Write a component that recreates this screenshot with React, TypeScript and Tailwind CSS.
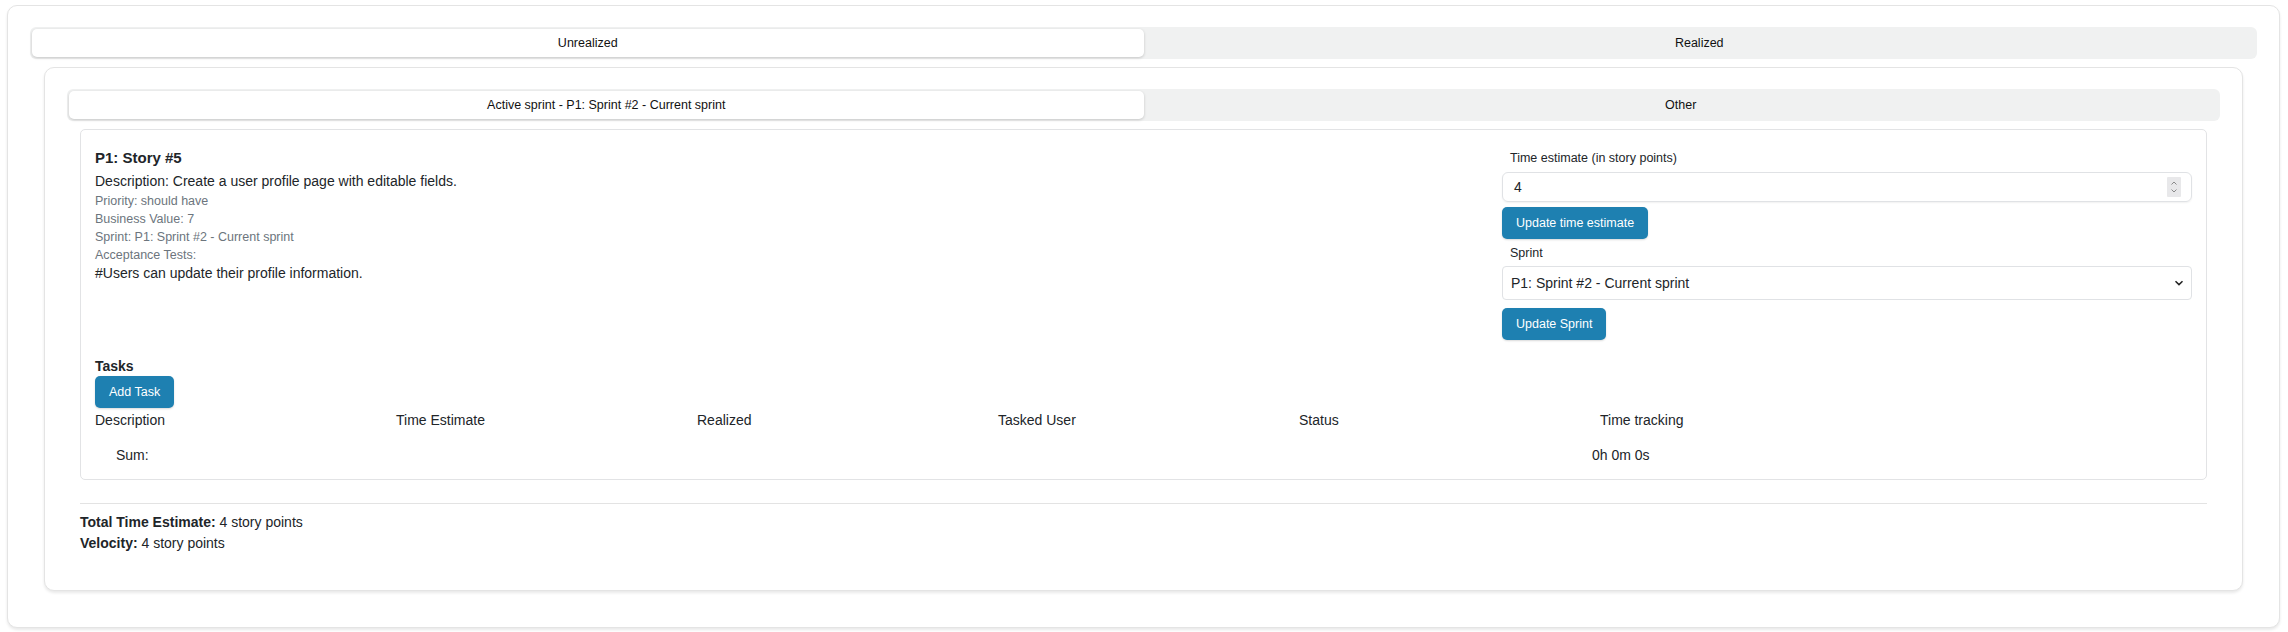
import React from "react";

const FONT = { fontFamily: '"Liberation Sans", Arial, sans-serif' };

function Tabs({ left, right }: { left: string; right: string }) {
  return (
    <div className="grid h-[32px] grid-cols-2 rounded-[6px] bg-[#f0f1f1] p-[2px]">
      <div className="flex items-center justify-center rounded-[5px] bg-white text-[12.5px] text-[#111] shadow-[0_1px_3px_rgba(0,0,0,0.18)]">
        {left}
      </div>
      <div className="flex items-center justify-center text-[12.5px] text-[#111]">{right}</div>
    </div>
  );
}

function Btn({ children }: { children: React.ReactNode }) {
  return (
    <div className="inline-flex h-[32px] items-center rounded-[5px] bg-[#1e80b1] px-[14px] text-[12.5px] text-white shadow-[0_1px_2px_rgba(0,0,0,0.15)]">
      {children}
    </div>
  );
}

function Spinner() {
  return (
    <svg width="14" height="20" viewBox="0 0 14 20" className="block">
      <rect x="0" y="0" width="14" height="20" rx="1" fill="#e8e8ea" />
      <path d="M4.5 7.5 L7 5 L9.5 7.5" fill="none" stroke="#8a8a8a" strokeWidth="1" />
      <path d="M4.5 12.5 L7 15 L9.5 12.5" fill="none" stroke="#8a8a8a" strokeWidth="1" />
    </svg>
  );
}

function Chevron() {
  return (
    <svg width="10" height="6" viewBox="0 0 10 6" className="block">
      <path d="M1.5 1.2 L5 4.6 L8.5 1.2" fill="none" stroke="#222" strokeWidth="1.5" />
    </svg>
  );
}

const cols = ["Description", "Time Estimate", "Realized", "Tasked User", "Status", "Time tracking"];

export default function App() {
  return (
    <div style={FONT} className="bg-white pb-[5px] pl-[7px] pr-[8px] pt-[5px] text-[#212529]">
      <div className="rounded-[10px] border border-[#e4e4e4] bg-white px-[22px] pb-[22px] pt-[21px] shadow-[0_2px_3px_rgba(0,0,0,0.09)]">
        <Tabs left="Unrealized" right="Realized" />
        <div className="mx-[14px] mb-[14px] mt-[8px]">
          <div className="rounded-[10px] border border-[#e4e4e4] bg-white px-[22px] pb-[22px] pt-[21px] shadow-[0_2px_3px_rgba(0,0,0,0.09)]">
            <Tabs left="Active sprint - P1: Sprint #2 - Current sprint" right="Other" />
            <div className="mx-[13px] mb-[14px] mt-[8px]">
              <div className="rounded-[5px] border border-[#e2e3e5] px-[14px] pb-[1px] pt-[16px]">
                <div className="grid grid-cols-[1fr_690px]">
                  <div>
                    <div className="text-[15px] font-bold leading-[24px]">P1: Story #5</div>
                    <div className="text-[14px] leading-[22px]">Description: Create a user profile page with editable fields.</div>
                    <div className="text-[12.5px] leading-[18px] text-[#6c757d]">
                      <div>Priority: should have</div>
                      <div>Business Value: 7</div>
                      <div>Sprint: P1: Sprint #2 - Current sprint</div>
                      <div>Acceptance Tests:</div>
                    </div>
                    <div className="text-[14px] leading-[18px]">#Users can update their profile information.</div>
                  </div>
                  <div className="flex flex-col items-start">
                    <div className="pl-[8px] text-[12.5px] leading-[24px]">Time estimate (in story points)</div>
                    <div className="mt-[2px] flex h-[30px] w-full items-center justify-between rounded-[6px] border border-[#e0e2e5] pl-[11px] pr-[10px] text-[14px] shadow-[0_1px_2px_rgba(0,0,0,0.06)]">
                      <span>4</span>
                      <Spinner />
                    </div>
                    <div className="mt-[5px]">
                      <Btn>Update time estimate</Btn>
                    </div>
                    <div className="mt-[2px] pl-[8px] text-[12.5px] leading-[24px]">Sprint</div>
                    <div className="mt-[1px] flex h-[34px] w-full items-center justify-between rounded-[4px] border border-[#e0e2e5] pl-[8px] pr-[7px] text-[14px]">
                      <span>P1: Sprint #2 - Current sprint</span>
                      <Chevron />
                    </div>
                    <div className="mt-[8px]">
                      <Btn>Update Sprint</Btn>
                    </div>
                  </div>
                </div>
                <div className="mt-[16px] text-[14px] font-bold leading-[20px]">Tasks</div>
                <Btn>Add Task</Btn>
                <div className="grid grid-cols-[301px_301px_301px_301px_301px_301px] text-[14px] leading-[24px]">
                  {cols.map((c) => (
                    <div key={c}>{c}</div>
                  ))}
                </div>
                <div className="grid h-[46px] grid-cols-[301px_301px_301px_301px_301px_301px] items-center text-[14px]">
                  <div className="pl-[21px]">Sum:</div>
                  <div />
                  <div />
                  <div />
                  <div />
                  <div className="-ml-[8px]">0h 0m 0s</div>
                </div>
              </div>
              <div className="mt-[23px] h-px bg-[#e3e3e3]" />
              <div className="mt-[8px] text-[14px] leading-[21px]">
                <div>
                  <span className="font-bold">Total Time Estimate:</span> 4 story points
                </div>
                <div>
                  <span className="font-bold">Velocity:</span> 4 story points
                </div>
              </div>
            </div>
          </div>
        </div>
      </div>
    </div>
  );
}
